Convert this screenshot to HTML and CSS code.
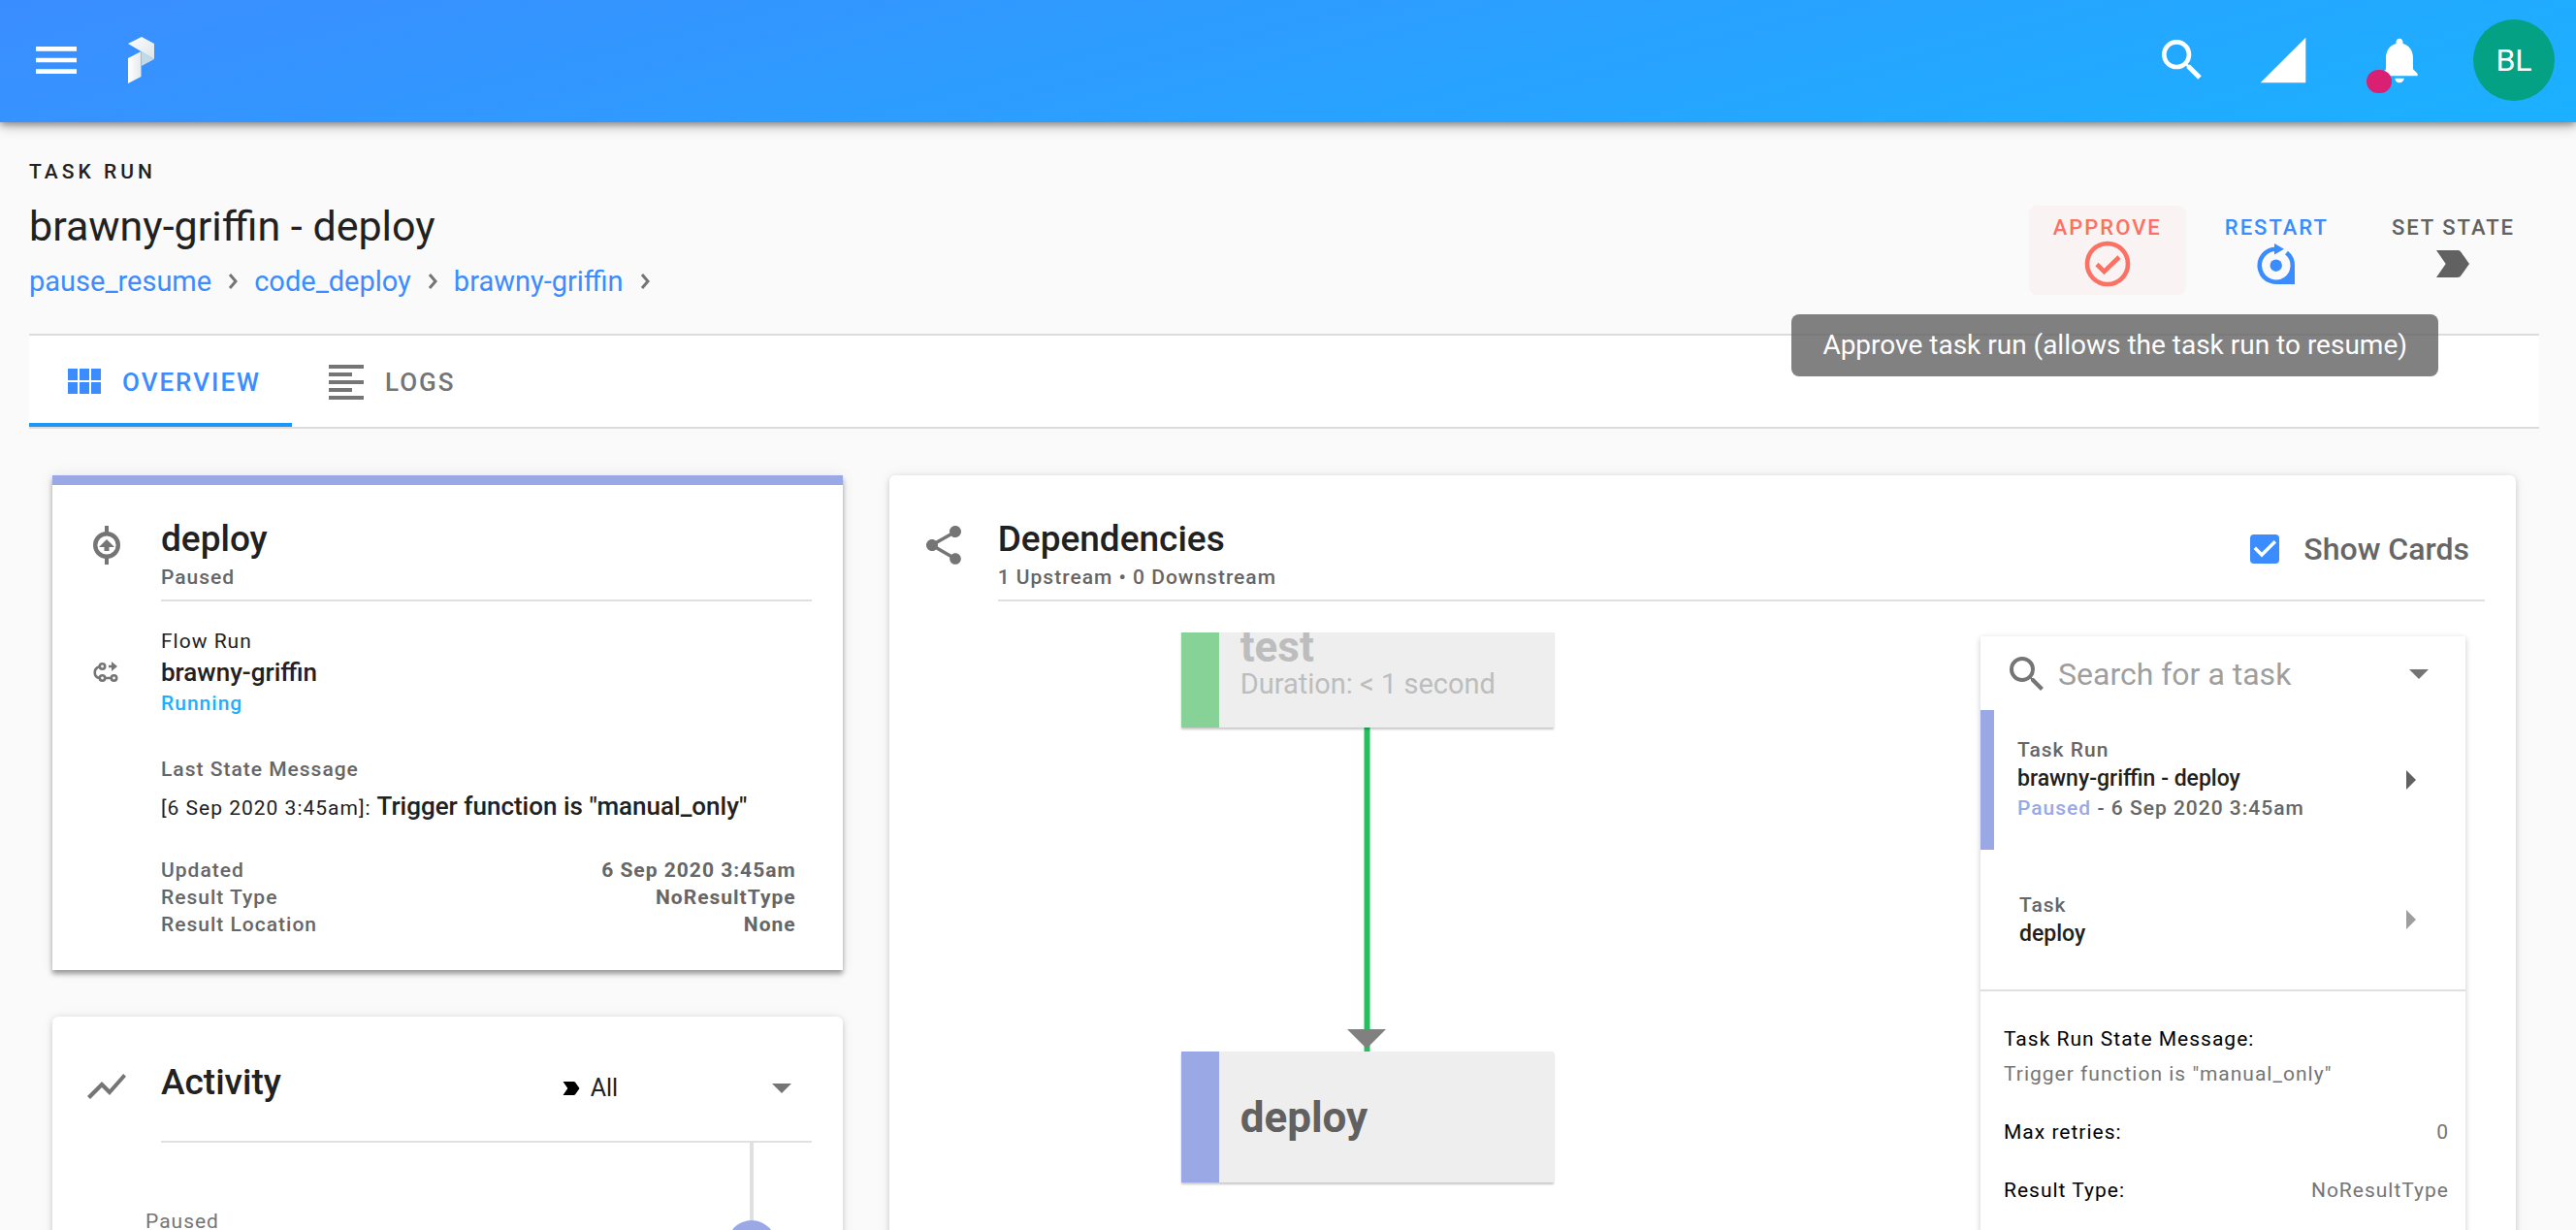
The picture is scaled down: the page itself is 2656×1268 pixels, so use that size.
FILE: index.html
```html
<!DOCTYPE html>
<html lang="en">
<head>
<meta charset="utf-8">
<meta name="viewport" content="width=device-width, initial-scale=1">
<title>brawny-griffin - deploy</title>
<link rel="stylesheet" href="styles.css">
</head>
<body>
<div class="app">
  <header class="topbar">
    <button class="icon-button" type="button" aria-label="Menu">
      <svg class="icon-lg" viewBox="0 0 24 24"><path d="M3 18h18v-2H3v2zm0-5h18v-2H3v2zm0-7v2h18V6H3z"/></svg>
    </button>
    <a class="logo" href="#" aria-label="Home">
      <svg width="28" height="48" viewBox="0 0 28 48">
        <defs>
          <linearGradient id="lg1" x1="0" y1="0" x2="1" y2="1"><stop offset="0" stop-color="#fff"/><stop offset="1" stop-color="#dbe5ea"/></linearGradient>
          <linearGradient id="lg2" x1="0" y1="0" x2="1" y2="0"><stop offset="0" stop-color="#fff"/><stop offset="1" stop-color="#e4eaee"/></linearGradient>
        </defs>
        <path fill="url(#lg1)" d="M14 0 27 7V23L0 7z"/>
        <path fill="#c4d9e6" d="M14 15 27 23 14 30z"/>
        <path fill="url(#lg2)" d="M0 22 13.500 15V41L0 48z"/>
      </svg>
    </a>
    <span class="spacer"></span>
    <nav class="topbar-tools" aria-label="Tools">
      <button class="icon-button" type="button" aria-label="Search">
        <svg class="icon-lg" viewBox="0 0 24 24"><path d="M15.500 14h-.79l-.28-.27A6.471 6.471 0 0 0 16 9.500 6.500 6.500 0 1 0 9.500 16c1.610 0 3.090-.59 4.230-1.570l.27.28v.79l5 4.990L20.490 19l-4.990-5zm-6 0C7.010 14 5 11.990 5 9.500S7.010 5 9.500 5 14 7.010 14 9.500 11.990 14 9.500 14z"/></svg>
      </button>
      <button class="icon-button" type="button" aria-label="Connection">
        <svg class="icon-lg" viewBox="0 0 24 24"><path d="M2 22h20V2z"/></svg>
      </button>
      <button class="icon-button bell" type="button" aria-label="Notifications">
        <svg class="icon-lg" viewBox="0 0 24 24"><path d="M12 22c1.100 0 2-.9 2-2h-4c0 1.100.9 2 2 2zm6-6v-5c0-3.070-1.630-5.640-4.500-6.320V4c0-.83-.67-1.500-1.500-1.500s-1.500.67-1.500 1.500v.68C7.640 5.360 6 7.920 6 11v5l-2 2v1h16v-1l-2-2z"/></svg>
        <span class="bell-dot"></span>
      </button>
    </nav>
    <button class="avatar" type="button">BL</button>
  </header>

  <main class="page">
    <div class="page-head">
      <div class="page-title">
        <p class="overline">TASK RUN</p>
        <h1>brawny-griffin - deploy</h1>
        <nav class="crumbs" aria-label="Breadcrumb">
          <a href="#">pause_resume</a>
          <svg class="chevron" viewBox="0 0 10 16"><path d="M2 1l6 7-6 7"/></svg>
          <a href="#">code_deploy</a>
          <svg class="chevron" viewBox="0 0 10 16"><path d="M2 1l6 7-6 7"/></svg>
          <a href="#">brawny-griffin</a>
          <svg class="chevron" viewBox="0 0 10 16"><path d="M2 1l6 7-6 7"/></svg>
        </nav>
      </div>
      <div class="actions">
        <button class="action approve" type="button" aria-describedby="approve-tip">
          <span>APPROVE</span>
          <svg class="icon" viewBox="0 0 48 48"><circle cx="24" cy="24" r="21" fill="none" stroke="currentColor" stroke-width="4.600"/><path d="M13 24.500l7.500 7.500L36 17" fill="none" stroke="currentColor" stroke-width="4.600"/></svg>
        </button>
        <button class="action restart" type="button">
          <span>RESTART</span>
          <svg class="icon" viewBox="0 0 48 48"><path d="M34.500 12.500A17 17 0 1 1 24 8.700" fill="none" stroke="currentColor" stroke-width="4.600"/><path d="M22 3l10 5.700-10 5.800zM24 45h19V25.700h-2.200C41 36 33 42.500 24 42.500z"/><circle cx="23.700" cy="25.700" r="6.200"/></svg>
        </button>
        <button class="action set-state" type="button">
          <span>SET STATE</span>
          <svg class="icon" viewBox="0 0 24 24"><path d="M3.500 18.990l11 .01c.67 0 1.270-.33 1.630-.84L20.500 12l-4.370-6.160c-.36-.51-.96-.84-1.630-.84l-11 .01L8.340 12 3.500 18.990z"/></svg>
        </button>
        <div class="tooltip" id="approve-tip" role="tooltip">Approve task run (allows the task run to resume)</div>
      </div>
    </div>

    <nav class="tabs" aria-label="Sections">
      <button class="tab active" type="button">
        <svg class="icon" viewBox="0 0 24 24"><path d="M4 11h5V5H4v6zm0 7h5v-6H4v6zm6 0h5v-6h-5v6zm6 0h5v-6h-5v6zm-6-7h5V5h-5v6zm6-6v6h5V5h-5z"/></svg>
        OVERVIEW
      </button>
      <button class="tab" type="button">
        <svg class="icon" viewBox="0 0 24 24"><path d="M15 15H3v2h12v-2zm0-8H3v2h12V7zM3 13h18v-2H3v2zm0 8h18v-2H3v2zM3 3v2h18V3H3z"/></svg>
        LOGS
      </button>
    </nav>

    <div class="columns">
      <div class="column">
        <section class="card run-card">
          <div class="card-head">
            <svg class="icon head-icon" viewBox="0 0 48 48"><circle cx="24" cy="24" r="11.800" fill="none" stroke="currentColor" stroke-width="4.400"/><path d="M22 4h4v8h-4zM22 36h4v8h-4zM24 18l8 8h-5.500v4h-5v-4H16z"/></svg>
            <div class="head-main">
              <div>
                <h2>deploy</h2>
                <p class="caption">Paused</p>
              </div>
            </div>
          </div>
          <div class="run-body">
            <div class="flow-run">
              <svg class="flow-icon" viewBox="0 0 26 22"><g fill="none" stroke="currentColor" stroke-width="2.600"><circle cx="9.500" cy="5" r="2.700"/><circle cx="9.500" cy="17" r="2.700"/><circle cx="21.500" cy="17" r="2.700"/><path d="M7 5C0 7 0 16 7 17M12 17h7M16 5h4"/></g><path d="M19 0l6 5-6 5z"/></svg>
              <p class="small">Flow Run</p>
              <p class="name">brawny-griffin</p>
              <p class="caption running">Running</p>
            </div>
            <p class="caption message-label">Last State Message</p>
            <p class="message"><span class="small">[6 Sep 2020 3:45am]:</span> Trigger function is "manual_only"</p>
            <table class="facts">
              <tr><th scope="row">Updated</th><td>6 Sep 2020 3:45am</td></tr>
              <tr><th scope="row">Result Type</th><td>NoResultType</td></tr>
              <tr><th scope="row">Result Location</th><td>None</td></tr>
            </table>
          </div>
        </section>

        <section class="card activity-card">
          <div class="card-head">
            <svg class="icon head-icon" viewBox="0 0 24 24"><path d="M3.500 18.490l6-6.010 4 4L22 6.920l-1.410-1.410-7.090 7.970-4-4L2 16.990z"/></svg>
            <div class="head-main">
              <h2>Activity</h2>
              <label class="filter">
                <svg class="filter-icon" viewBox="0 0 24 24"><path d="M3.500 18.990l11 .01c.67 0 1.270-.33 1.630-.84L20.500 12l-4.370-6.160c-.36-.51-.96-.84-1.630-.84l-11 .01L8.340 12 3.500 18.990z"/></svg>
                <select aria-label="State filter"><option>All</option></select>
                <svg class="caret" viewBox="0 0 20 10"><path d="M0 0h20L10 10z"/></svg>
              </label>
            </div>
          </div>
          <ol class="timeline">
            <li><span>Paused</span><i class="dot"></i></li>
          </ol>
        </section>
      </div>

      <div class="column">
        <section class="card">
          <div class="card-head">
            <svg class="icon head-icon" viewBox="0 0 24 24"><path d="M18 16.080c-.76 0-1.440.3-1.960.77L8.910 12.700c.05-.23.09-.46.09-.7s-.04-.47-.09-.7l7.050-4.110c.54.5 1.250.81 2.040.81 1.660 0 3-1.340 3-3s-1.340-3-3-3-3 1.340-3 3c0 .24.04.47.09.7L8.040 9.810C7.500 9.310 6.790 9 6 9c-1.660 0-3 1.340-3 3s1.340 3 3 3c.79 0 1.500-.31 2.040-.81l7.120 4.160c-.05.21-.08.43-.08.65 0 1.610 1.310 2.920 2.920 2.920 1.610 0 2.920-1.310 2.920-2.920s-1.310-2.920-2.920-2.920z"/></svg>
            <div class="head-main">
              <div>
                <h2>Dependencies</h2>
                <p class="caption">1 Upstream • 0 Downstream</p>
              </div>
              <label class="show-cards"><input type="checkbox" checked>Show Cards</label>
            </div>
          </div>
          <div class="deps">
            <div class="graph">
              <div class="edge"></div>
              <svg class="arrow" viewBox="0 0 40 20"><path d="M0 0h40L20 20z"/></svg>
              <div class="node test"><strong>test</strong><span>Duration: &lt; 1 second</span></div>
              <div class="node current"><strong>deploy</strong></div>
            </div>
            <aside class="panel">
              <label class="search">
                <svg class="icon" viewBox="0 0 24 24"><path d="M15.500 14h-.79l-.28-.27A6.471 6.471 0 0 0 16 9.500 6.500 6.500 0 1 0 9.500 16c1.610 0 3.090-.59 4.230-1.570l.27.28v.79l5 4.990L20.490 19l-4.990-5zm-6 0C7.010 14 5 11.990 5 9.500S7.010 5 9.500 5 14 7.010 14 9.500 11.990 14 9.500 14z"/></svg>
                <input type="text" placeholder="Search for a task" aria-label="Search for a task">
                <svg class="caret" viewBox="0 0 20 10"><path d="M0 0h20L10 10z"/></svg>
              </label>
              <a class="entry entry-run" href="#">
                <span class="entry-text">
                  <span class="caption">Task Run</span>
                  <span class="entry-name">brawny-griffin - deploy</span>
                  <span class="caption"><span class="paused">Paused</span> - 6 Sep 2020 3:45am</span>
                </span>
                <svg class="go" viewBox="0 0 10 20"><path d="M0 0l10 10L0 20z"/></svg>
              </a>
              <a class="entry" href="#">
                <span class="entry-text">
                  <span class="caption">Task</span>
                  <span class="entry-name">deploy</span>
                </span>
                <svg class="go go-light" viewBox="0 0 10 20"><path d="M0 0l10 10L0 20z"/></svg>
              </a>
              <dl class="details">
                <div class="stacked"><dt>Task Run State Message:</dt><dd>Trigger function is "manual_only"</dd></div>
                <div><dt>Max retries:</dt><dd>0</dd></div>
                <div><dt>Result Type:</dt><dd>NoResultType</dd></div>
              </dl>
            </aside>
          </div>
        </section>
      </div>
    </div>
  </main>
</div>
</body>
</html>
```
FILE: styles.css
```css
* { box-sizing: border-box; }

body {
  margin: 0;
  background: #fafafa;
  color: #212121;
  font-family: Roboto, "Liberation Sans", sans-serif;
  font-size: 21px;
}

h1, h2, p, ol, dl, dd { margin: 0; padding: 0; }
a { color: inherit; text-decoration: none; }
button { font: inherit; border: 0; background: none; padding: 0; color: inherit; cursor: pointer; }
svg { display: block; flex: none; fill: currentColor; }

.app { height: 100vh; display: flex; flex-direction: column; }
.icon { width: 48px; height: 48px; }
.icon-lg { width: 56px; height: 56px; }

/* top bar */
.topbar {
  flex: none;
  height: 126px;
  padding: 0 22px 2px 30px;
  display: flex;
  align-items: center;
  color: #fff;
  background: linear-gradient(165deg, #3b8dff, #1bb1ff);
  box-shadow: 0 2px 8px rgba(0, 0, 0, .4), 0 4px 14px rgba(0, 0, 0, .2);
  z-index: 2;
}
.logo { margin-left: 46px; }
.spacer { flex: 1; }
.topbar-tools { display: flex; gap: 48px; margin-right: 48px; }
.topbar-tools .bell { position: relative; margin-left: 16px; }
.bell-dot {
  position: absolute;
  left: -6px;
  bottom: -6px;
  width: 26px;
  height: 24px;
  border-radius: 12px;
  background: #da2072;
}
.avatar {
  width: 84px;
  height: 84px;
  border-radius: 50%;
  background: #05a184;
  font-size: 32px;
}

/* page head */
.page {
  flex: 1;
  min-height: 0;
  overflow-y: auto;
  scrollbar-width: none;
  padding: 35px 38px 48px 30px;
}
.page-head { display: flex; justify-content: space-between; align-items: flex-end; }
.overline { font-weight: 500; line-height: 32px; letter-spacing: 4px; }
h1 { margin-top: 12px; font-size: 43px; font-weight: 400; line-height: 56px; }
.crumbs {
  display: flex;
  align-items: center;
  gap: 17px;
  margin-top: 9px;
  font-size: 29px;
  line-height: 40px;
  color: #3b8dff;
}
.chevron { width: 10px; height: 16px; fill: none; stroke: #757575; stroke-width: 3; }

.actions { position: relative; display: flex; gap: 15px; margin-bottom: 6px; }
.action {
  display: flex;
  flex-direction: column;
  align-items: center;
  gap: 3px;
  padding: 13px 25px 8px;
  border-radius: 8px;
  font-weight: 500;
  line-height: 20px;
  font-size: 22px;
  letter-spacing: 2px;
}
.approve { color: #fb7164; background: #f9f3f3; }
.restart { color: #3b8dff; }
.set-state { color: #616161; }
.tooltip {
  position: absolute;
  top: 112px;
  right: 104px;
  padding: 12px 32px;
  border-radius: 8px;
  background: rgba(97, 97, 97, .8);
  color: #fff;
  font-size: 28px;
  line-height: 40px;
  white-space: nowrap;
}

/* tabs */
.tabs {
  display: flex;
  height: 98px;
  margin-top: 34px;
  background: #fff;
  border-top: 2px solid #dcdcdc;
  border-bottom: 2px solid #dcdcdc;
}
.tab {
  display: flex;
  align-items: center;
  gap: 16px;
  padding: 6px 32px 0;
  border-bottom: 4px solid transparent;
  color: #757575;
  font-size: 26px;
  font-weight: 500;
  letter-spacing: 2px;
}
.tab.active { color: #3b8dff; border-color: #1e96f5; }

/* cards */
.columns { display: grid; grid-template-columns: minmax(0, 1fr) minmax(0, 2fr); padding-top: 48px; }
.column { display: flex; flex-direction: column; gap: 48px; padding: 0 24px; }
.card {
  background: #fff;
  border-radius: 6px;
  box-shadow: 0 2px 6px rgba(0, 0, 0, .16), 0 0 14px rgba(0, 0, 0, .06);
}
.card-head { display: flex; gap: 32px; padding: 44px 32px 0; color: #757575; }
.head-icon { margin-top: 4px; }
.head-main {
  flex: 1;
  display: flex;
  justify-content: space-between;
  align-items: flex-start;
  padding-bottom: 9px;
  border-bottom: 2px solid #e0e0e0;
}
h2 { font-size: 37px; font-weight: 500; line-height: 44px; color: #212121; }
.caption { font-weight: 500; line-height: 28px; letter-spacing: 1px; color: #666; }
.small { font-size: 21px; font-weight: 400; line-height: 28px; letter-spacing: 1px; }
.head-main .caption { margin-top: 3px; }

.run-card {
  border-top: 10px solid #9aa8e6;
  border-radius: 0;
  box-shadow: 0 4px 5px rgba(0, 0, 0, .36), 0 0 14px rgba(0, 0, 0, .08);
}
.run-card .card-head { padding-top: 34px; }
.run-body { padding: 27px 48px 33px 112px; }
.flow-run { position: relative; display: grid; gap: 2px; }
.flow-icon {
  position: absolute;
  left: -70px;
  top: 35px;
  width: 26px;
  height: 22px;
  color: #757575;
}
.name, .message { font-size: 26px; font-weight: 500; line-height: 32px; }
.caption.running { color: #21aeff; }
.message-label { margin: 40px 0 8px; }
.facts { width: 100%; margin-top: 36px; border-collapse: collapse; line-height: 28px; letter-spacing: 1px; color: #666; }
.facts th { padding: 0; text-align: left; font-weight: 500; }
.facts td { padding: 0; text-align: right; font-weight: 700; }

.activity-card .card-head { padding-top: 46px; }
.activity-card .head-icon { margin-top: 2px; }
.activity-card .head-main { padding-bottom: 38px; align-items: flex-end; }
.filter { display: flex; align-items: center; width: 239px; margin-right: 21px; }
.filter-icon { width: 24px; height: 24px; color: #000; }
.filter select {
  flex: 1;
  height: 32px;
  margin-left: 8px;
  padding: 0;
  border: 0;
  background: none;
  appearance: none;
  font: 400 25px/32px Roboto, "Liberation Sans", sans-serif;
  color: #212121;
}
.caret { width: 20px; height: 10px; color: #757575; }
.timeline { list-style: none; padding: 0 69px 0 96px; }
.timeline li {
  position: relative;
  display: flex;
  justify-content: space-between;
  min-height: 300px;
  padding-top: 67px;
  line-height: 28px;
  letter-spacing: 1px;
  color: #757575;
}
.timeline li::before {
  content: "";
  position: absolute;
  top: 0;
  bottom: 0;
  right: 23px;
  width: 4px;
  background: #e0e0e0;
}
.dot { position: relative; width: 50px; height: 50px; margin-top: 13px; border-radius: 50%; background: #9aa8e6; }

/* dependencies */
.show-cards {
  display: flex;
  align-items: center;
  gap: 25px;
  margin: 12px 16px 0 0;
  font-size: 32px;
  font-weight: 500;
  line-height: 40px;
  color: #666;
}
.show-cards input {
  appearance: none;
  width: 30px;
  height: 30px;
  margin: 0;
  border-radius: 4px;
  background: #3b8dff;
}
.show-cards input:checked::before {
  content: "";
  display: block;
  height: 100%;
  background: #fff;
  clip-path: polygon(39% 78%, 11% 50%, 19% 42%, 39% 62%, 81% 20%, 89% 28%);
}
.deps { display: flex; padding: 32px 52px 0 0; }
.graph { position: relative; flex: 1; height: 700px; overflow: hidden; }
.node {
  position: absolute;
  left: 301px;
  width: 384px;
  height: 135px;
  padding-left: 22px;
  display: flex;
  flex-direction: column;
  justify-content: center;
  border-left: 39px solid #9aa8e6;
  background: #eee;
  box-shadow: 0 2px 2px rgba(0, 0, 0, .22);
  color: #616161;
}
.node strong { font-size: 44px; line-height: 44px; }
.node span { font-size: 29px; line-height: 32px; }
.node.test { top: -37px; border-color: #86d297; color: #bdbdbd; }
.node.current { top: 432px; }
.edge {
  position: absolute;
  left: 489px;
  top: 97px;
  width: 7px;
  height: 336px;
  background: #21c15c;
  border: solid #8fe0ad;
  border-width: 0 1px;
}
.arrow { position: absolute; left: 472px; top: 409px; width: 40px; height: 20px; color: #808080; }

.panel {
  width: 500px;
  margin-top: 4px;
  background: #fff;
  box-shadow: 0 2px 6px rgba(0, 0, 0, .22);
}
.search { display: flex; align-items: center; height: 76px; padding: 1px 38px 0 24px; color: #757575; }
.search input {
  flex: 1;
  min-width: 0;
  padding: 0;
  margin-left: 8px;
  border: 0;
  outline: 0;
  background: none;
  font: 400 32px/40px Roboto, "Liberation Sans", sans-serif;
  color: #212121;
}
.search input::placeholder { color: #9e9e9e; opacity: 1; }
.entry { display: flex; align-items: center; justify-content: space-between; height: 144px; padding: 0 51px 0 40px; }
.entry-run { padding-left: 24px; border-left: 14px solid #9aa8e6; }
.entry-text { display: grid; gap: 1px; }
.entry-run .entry-text { padding-bottom: 3px; }
.entry-name { font-size: 23px; font-weight: 500; line-height: 30px; }
.caption .paused { color: #9aa8e6; }
.go { width: 10px; height: 20px; color: #616161; }
.go-light { color: #9e9e9e; }
.details {
  display: grid;
  gap: 32px;
  padding: 35px 17px 32px 24px;
  border-top: 2px solid #e0e0e0;
  line-height: 28px;
  letter-spacing: 1px;
}
.details div { display: flex; justify-content: space-between; }
.details .stacked { flex-direction: column; gap: 8px; }
.details dt { color: #000; }
.details dd { color: #757575; }
```
